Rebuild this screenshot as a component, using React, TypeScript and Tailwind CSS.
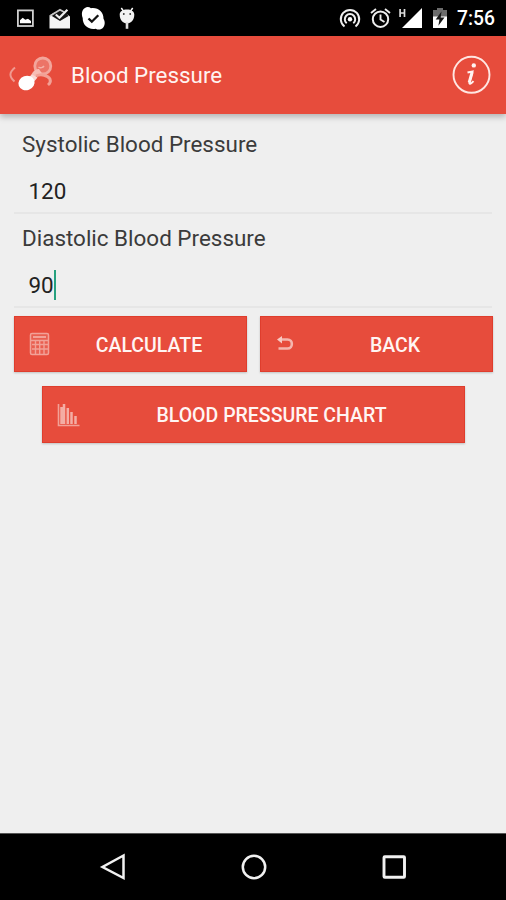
import type { ReactNode } from 'react';

function StatusBar() {
  return (
    <div className="flex h-9 items-center bg-black pr-[11px] pl-[16px] text-white">
      <svg className="h-9 w-[126px]" viewBox="16 0 126 36" fill="none">
        <rect x="17.9" y="10.4" width="15" height="15.6" stroke="#cfcfcf" strokeWidth="1.8" />
        <path d="M20 23.300v-3l2.700-2.500 2.600 2 2.700-1 3 2.300v2.200z" fill="#fff" />
        <path d="M49.500 15.600l5-3.400 5.200 6.300h2l5-4.400 3.300 2.500v11.900H49.500z" fill="#f4f4f4" />
        <path d="M51.500 15.700L60 21l8.500-5L65 11l-5-1.600-5 3z" fill="#151515" />
        <path d="M50 16l10-6.200 4 2.200" stroke="#c4c4c4" strokeWidth="1.700" />
        <path d="M55.800 14.500l3.600 3.200 8-8" stroke="#eee" strokeWidth="2.200" />
        <path d="M51 17.500l9 5.300 9-5.300" stroke="#f4f4f4" strokeWidth="1.500" />
        <path d="M85 8c2-1.500 4.300-1 6 .2 7-1 12.500 3.500 12.500 10.500 2 3.500 1.300 6.500-.3 8.800-2 2.400-5 2.700-7.500 1.200C88 30 82.500 25 82.700 18 81.300 14 81.700 10 85 8z" fill="#fff" />
        <path d="M88.500 18.500l3.300 3.200 6.500-6.500" stroke="#111" strokeWidth="2.300" />
        <path d="M121.300 8l2.200 3.200M132.700 8l-2.200 3.200" stroke="#fff" strokeWidth="1.500" />
        <path d="M119.700 14.500c0-3 3-5 7.300-5s7.300 2 7.300 5c0 5.500-3.200 8.800-7.300 8.800s-7.300-3.300-7.300-8.800z" fill="#f3f3f3" />
        <circle cx="123.800" cy="14" r=".9" fill="#333" />
        <circle cx="130.200" cy="14" r=".9" fill="#333" />
        <path d="M127 22v6.800" stroke="#ddd" strokeWidth="2.600" />
      </svg>
      <svg className="ml-auto h-9 w-[114px]" viewBox="338 0 114 36" fill="none">
        <g stroke="#eee" strokeWidth="2">
          <path d="M344.500 26.500a9.200 9.200 0 1 1 11 0" />
          <path d="M346.700 23.300a5.200 5.200 0 1 1 6.600 0" />
        </g>
        <circle cx="350" cy="19.300" r="2.200" fill="#fff" />
        <circle cx="380.500" cy="19.200" r="7.700" stroke="#eee" strokeWidth="2" />
        <path d="M380.500 14.500v5l4 2.500M371 13l5-4M390 13l-5-4" stroke="#eee" strokeWidth="1.900" />
        <path d="M400.100 9v8M404.500 9v8M400 13h5" stroke="#ddd" strokeWidth="1.700" />
        <path d="M402 28l20-20v20z" fill="#fff" />
        <path d="M437 8h6v2h4v7h-14v-7h4z" fill="#6c6c6c" />
        <path d="M433 16.500h14V28h-14z" fill="#fff" />
        <path d="M441.500 11.500l-5.800 8h3.700l-1 6.300 6.100-8.300h-3.800z" fill="#161616" />
      </svg>
      <span className="ml-[5px] w-[38px] pt-[2px] text-[19.300px] leading-9 font-medium whitespace-nowrap">7:56</span>
    </div>
  );
}

function Header() {
  return (
    <header className="relative z-10 flex h-[78px] items-center bg-[#e74c3c] pr-[14px] pl-[8px] shadow-[0_3px_6px_rgba(0,0,0,0.25)]">
      <svg className="h-[40px] w-[48px]" viewBox="8 55.500 48 40" fill="none">
        <path d="M15 68c-6 5-6 9-.5 14" stroke="#f09a90" strokeWidth="2" />
        <circle cx="42.800" cy="66.500" r="8" fill="#ec7467" stroke="#f3a59b" strokeWidth="2.800" />
        <path d="M38.500 67.500c2 1.500 4.500.5 5.500-1" stroke="#f5b0a7" strokeWidth="1.500" />
        <path d="M30 78c2-5 5-9 9-8.500l3 4.500c-4 0-6 2-8 6z" fill="#f7bdb5" />
        <path d="M36 76.500c5-2.500 12-.5 14 3 .8 2-.2 4.500-2 6" stroke="#f2a095" strokeWidth="2.900" />
        <path d="M32 75l5.500 3-5 6-5-5z" fill="#fbdad6" />
        <ellipse cx="26.500" cy="83.500" rx="8.200" ry="7.200" transform="rotate(-20 26.500 83.500)" fill="#fff" />
      </svg>
      <h1 className="ml-[15px] text-[22.400px] leading-7 font-normal whitespace-nowrap text-[#fff3f1]">Blood Pressure</h1>
      <svg className="ml-auto h-10 w-10" viewBox="0 0 40 40" fill="none">
        <circle cx="19.500" cy="19.800" r="18" stroke="#ffe6e2" strokeWidth="1.900" />
        <circle cx="21.800" cy="10.400" r="2.200" fill="#fff3f1" />
        <path d="M15.500 17.500l5-1-3 10.500c-.5 2.700 1 2.500 4-.8" stroke="#fff3f1" strokeWidth="2" />
        <path d="M20.200 17l-3 10.500" stroke="#fff3f1" strokeWidth="3" />
      </svg>
    </header>
  );
}

function Field({ label, value, active = false }: { label: string; value: string; active?: boolean }) {
  return (
    <div className="h-[94px] px-[14px]">
      <div className="pt-[16px] pl-[8px] text-[22.450px] leading-7 whitespace-nowrap text-[#3b3b3b]">{label}</div>
      <div className="mt-[13px] flex h-[43px] items-center border-b-2 border-[#e6e6e6] pb-[2px] pl-[14.500px] text-[22.450px] leading-7 text-[#222]">
        <span>{value}</span>
        {active && <span className="h-[30px] w-[2px] bg-[#26a17f]" />}
      </div>
    </div>
  );
}

function ActionButton({ icon, children, className }: { icon: ReactNode; children: ReactNode; className: string }) {
  return (
    <button className={`flex items-center border border-[#df3d2d] bg-[#e74c3c] pl-[13px] text-[19.500px] font-medium whitespace-nowrap text-[#fff5f3] shadow-[0_1px_2px_rgba(0,0,0,0.2)] ${className}`}>
      {icon}
      <span className="flex-1 pt-[3px] text-center">{children}</span>
    </button>
  );
}

function CalculatorIcon() {
  return (
    <svg className="h-6 w-6" viewBox="0 0 24 24" fill="none">
      <rect x="2.500" y="1.500" width="18" height="21" rx="1.500" fill="#e95f50" stroke="#f2a197" strokeWidth="1.500" />
      <path d="M5 5h13" stroke="#f2a197" strokeWidth="2" />
      <path d="M3 8.500h17M4 12.500h16M4 17h16M7.500 9v13M11.700 9v13M16 9v13" stroke="#f2a197" strokeWidth="1.400" />
    </svg>
  );
}

function ReturnIcon() {
  return (
    <svg className="h-6 w-6" viewBox="0 0 24 24" fill="none">
      <path d="M5 7.500h8.500c5.800 0 5.800 9 0 9H4.500" stroke="#f5b5ad" strokeWidth="2.600" />
      <path d="M8 4v7.500L3 7.500z" fill="#f8c9c3" />
    </svg>
  );
}

function ChartIcon() {
  return (
    <svg className="h-6 w-6" viewBox="0 0 24 24" fill="none">
      <path d="M2.500 1v21.500h21" stroke="#f2a197" strokeWidth="1.600" />
      <path d="M5.500 4v17M8 1v20M11.800 5v16M15.500 9v12M19.500 13v8" stroke="#f4ada4" strokeWidth="2.500" />
    </svg>
  );
}

function NavigationBar() {
  return (
    <nav className="flex h-[67px] items-center justify-between border-t border-[#555] bg-black pr-[98px] pl-[99px] text-[#f1f1f1]">
      <svg className="h-7 w-7" viewBox="0 0 28 28" fill="none">
        <path d="M24.500 2.500v22.500L3.500 14z" stroke="currentColor" strokeWidth="2.500" />
      </svg>
      <svg className="h-7 w-7" viewBox="0 0 28 28" fill="none">
        <circle cx="14" cy="14" r="11.200" stroke="currentColor" strokeWidth="2.500" />
      </svg>
      <svg className="h-7 w-7" viewBox="0 0 28 28" fill="none">
        <rect x="4" y="3.700" width="20.500" height="20.500" rx=".8" stroke="currentColor" strokeWidth="2.900" />
      </svg>
    </nav>
  );
}

export default function App() {
  return (
    <div className="flex h-[900px] w-[506px] flex-col overflow-hidden bg-[#efefef] font-['Roboto',sans-serif]">
      <StatusBar />
      <Header />
      <main className="flex-1">
        <Field label="Systolic Blood Pressure" value="120" />
        <Field label="Diastolic Blood Pressure" value="90" active />
        <div className="mt-[14px] flex gap-[13px] pl-[14px]">
          <ActionButton className="h-[56px] w-[233px]" icon={<CalculatorIcon />}>CALCULATE</ActionButton>
          <ActionButton className="h-[56px] w-[233px]" icon={<ReturnIcon />}>BACK</ActionButton>
        </div>
        <ActionButton className="mx-auto mt-[14px] h-[57px] w-[423px]" icon={<ChartIcon />}>BLOOD PRESSURE CHART</ActionButton>
      </main>
      <NavigationBar />
    </div>
  );
}
